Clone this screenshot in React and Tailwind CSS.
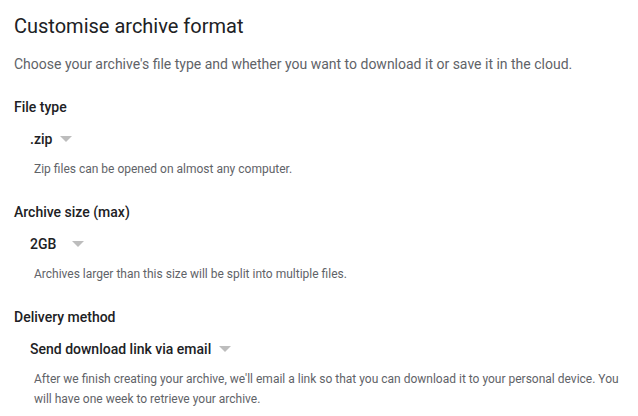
function Caret() {
  return (
    <svg width="12" height="6" viewBox="0 0 12 6" className="shrink-0">
      <path d="M0 0h12L6 6z" fill="#bdbdbd" />
    </svg>
  );
}

function Section({ title, value, gap, help, className = "" }) {
  return (
    <div className={className}>
      <h3 className="text-[14px] leading-5 font-medium text-[#202124]">{title}</h3>
      <div className="mt-[12px] ml-4 flex items-center h-5">
        <span className="text-[14px] font-medium text-[#202124]">{value}</span>
        <span className={gap}>
          <Caret />
        </span>
      </div>
      <p className="mt-[10px] ml-5 text-[12px] leading-5 text-[#5f6368]">{help}</p>
    </div>
  );
}

export default function App() {
  return (
    <div
      className="w-[638px] h-[416px] bg-white px-[14px] pt-[10px] overflow-hidden"
      style={{ fontFamily: "Roboto, 'Liberation Sans', sans-serif" }}
    >
      <h2 className="text-[20px] leading-8 text-[#202124]">Customise archive format</h2>
      <p className="mt-[12px] text-[14px] leading-5 text-[#5f6368]">
        Choose your archive's file type and whether you want to download it or save it in the cloud.
      </p>

      <Section
        className="mt-[23px]"
        title="File type"
        value=".zip"
        gap="ml-2"
        help="Zip files can be opened on almost any computer."
      />
      <Section
        className="mt-[23px]"
        title="Archive size (max)"
        value="2GB"
        gap="ml-4"
        help="Archives larger than this size will be split into multiple files."
      />
      <Section
        className="mt-[23px]"
        title="Delivery method"
        value="Send download link via email"
        gap="ml-2"
        help="After we finish creating your archive, we'll email a link so that you can download it to your personal device. You will have one week to retrieve your archive."
      />
    </div>
  );
}
